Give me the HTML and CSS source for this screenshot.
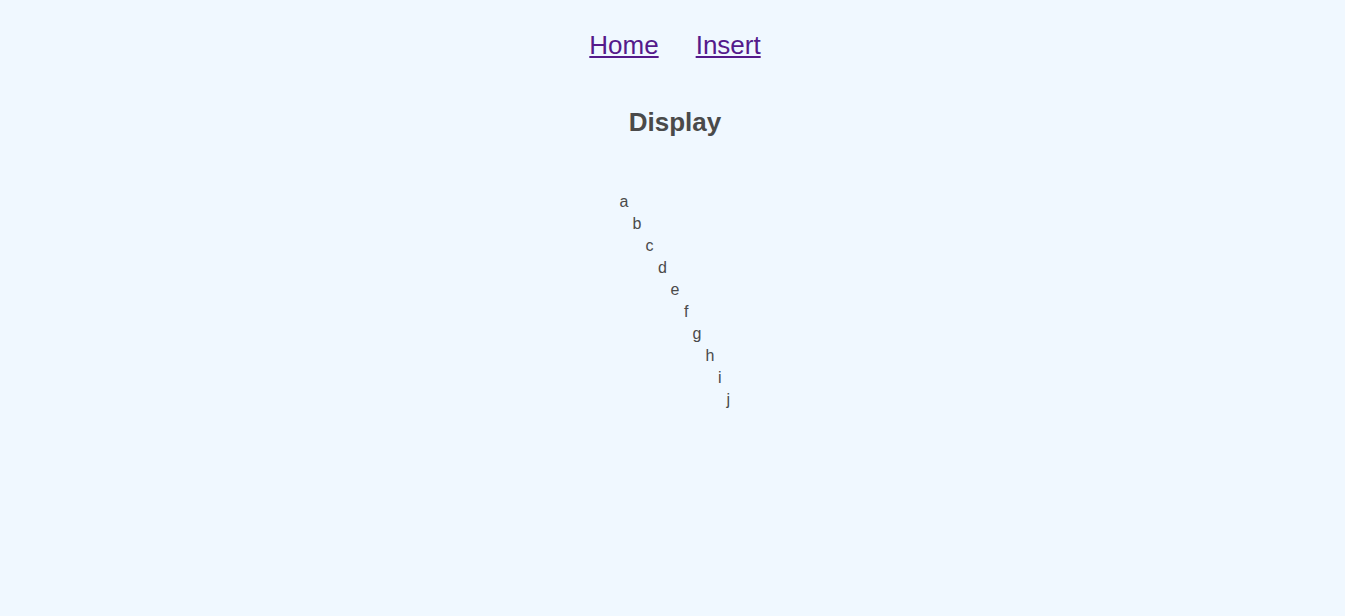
FILE: index.html
```html
<!DOCTYPE html>
<html lang="en">
<head>
<meta charset="utf-8">
<title>Display</title>
<link rel="stylesheet" href="styles.css">
</head>
<body>
<nav class="nav">
  <a class="nav-link" href="#home">Home</a>
  <a class="nav-link" href="#insert">Insert</a>
</nav>
<h1 class="title">Display</h1>
<div class="tree">
  <div class="node" style="padding-left: 4.5px">a</div>
  <div class="node" style="padding-left: 17.5px">b</div>
  <div class="node" style="padding-left: 30.5px">c</div>
  <div class="node" style="padding-left: 43px">d</div>
  <div class="node" style="padding-left: 55.5px">e</div>
  <div class="node" style="padding-left: 69px">f</div>
  <div class="node" style="padding-left: 77.5px">g</div>
  <div class="node" style="padding-left: 90.5px">h</div>
  <div class="node" style="padding-left: 103px">i</div>
  <div class="node" style="padding-left: 111.5px">j</div>
</div>
</body>
</html>
```
FILE: styles.css
```css
html, body {
  margin: 0;
  padding: 0;
  background: #f0f8ff;
}
body {
  font-family: "Liberation Sans", Arial, sans-serif;
  color: #4a4a4a;
  padding-left: 5px;
}
.nav {
  display: flex;
  justify-content: center;
  gap: 37px;
  padding-top: 30px;
}
.nav-link {
  font-size: 26px;
  color: #551a8b;
  text-decoration: underline;
}
.title {
  margin: 46px 0 0;
  text-align: center;
  font-size: 26px;
  font-weight: bold;
  color: #4a4a4a;
}
.tree {
  width: 120px;
  margin: 53px auto 0;
  font-size: 16px;
  line-height: 22px;
}
.node {
  white-space: nowrap;
}
```
